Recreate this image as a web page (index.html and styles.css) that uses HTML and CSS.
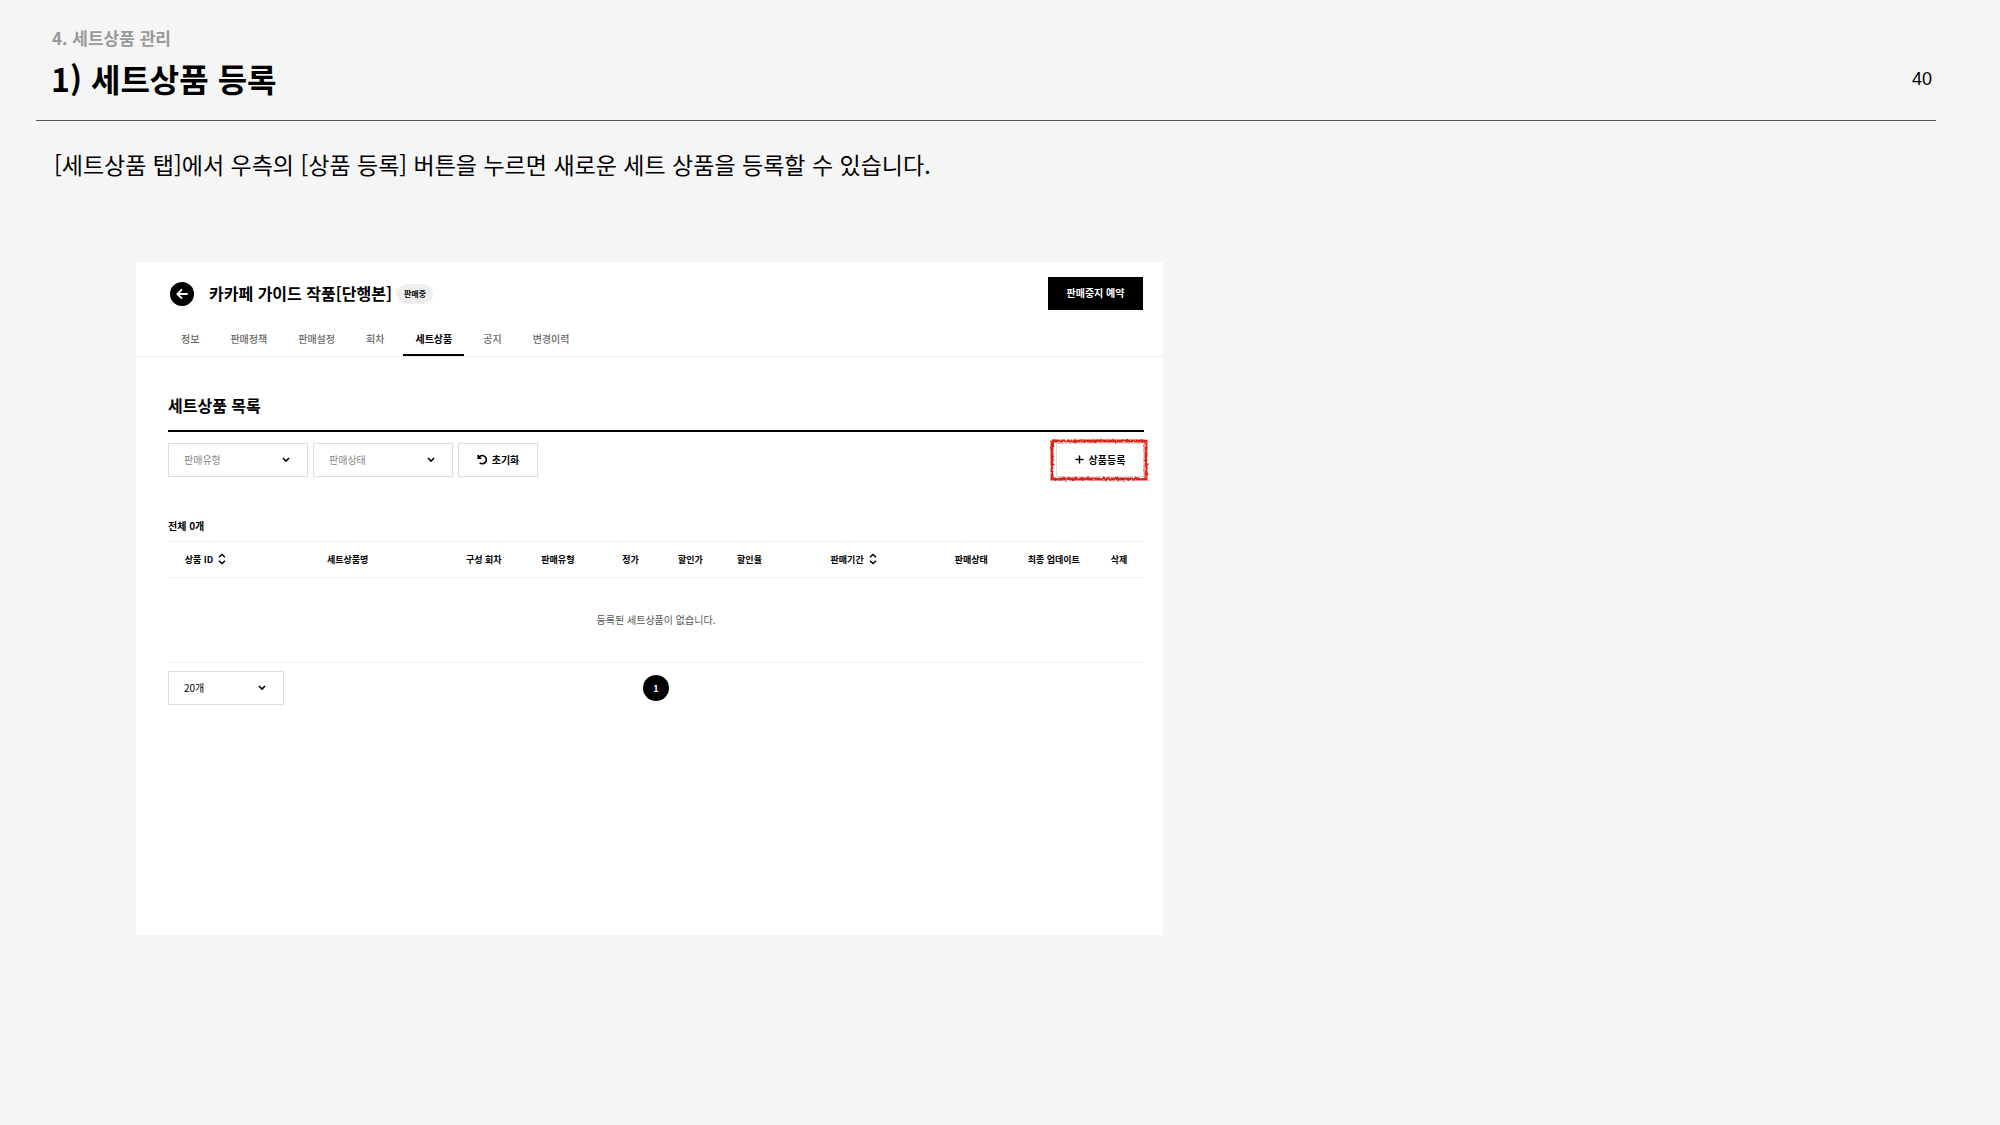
FILE: index.html
```html
<!DOCTYPE html>
<html lang="ko">
  <head>
    <meta charset="UTF-8" />
    <meta name="viewport" content="width=device-width, initial-scale=1.0" />
    <title>세트상품 등록</title>
    <link rel="stylesheet" href="styles.css">
  </head>
  <body>
    <header class="page-header">
      <div>
        <p class="chapter">4. 세트상품 관리</p>
        <h1>1) 세트상품 등록</h1>
      </div>
      <span class="page-number">40</span>
    </header>

    <p class="lead">[세트상품 탭]에서 우측의 [상품 등록] 버튼을 누르면 새로운 세트 상품을 등록할 수 있습니다.</p>

    <main class="panel">
      <div class="panel-header">
        <button class="back" aria-label="뒤로">
          <svg width="24" height="24" viewBox="0 0 24 24" fill="none" stroke="#fff" stroke-width="1.8" stroke-linecap="round" stroke-linejoin="round">
            <path d="M17 12H7.5M11.5 7.8L7.3 12l4.2 4.2" />
          </svg>
        </button>
        <h2>카카페 가이드 작품[단행본]</h2>
        <span class="badge">판매중</span>
        <button class="stop-button">판매중지 예약</button>
      </div>

      <nav class="tabs">
        <a href="#">정보</a>
        <a href="#">판매정책</a>
        <a href="#">판매설정</a>
        <a href="#">회차</a>
        <a href="#" class="active">세트상품</a>
        <a href="#">공지</a>
        <a href="#">변경이력</a>
      </nav>

      <section class="content">
        <h3>세트상품 목록</h3>

        <div class="filters">
          <select class="filter" aria-label="판매유형">
            <option>판매유형</option>
          </select>
          <select class="filter" aria-label="판매상태">
            <option>판매상태</option>
          </select>
          <button class="reset">
            <svg width="11" height="11" viewBox="0 0 11 11" fill="none" stroke="#000" stroke-width="1.6">
              <path d="M1.2 1v3.2h3.2M1.5 4A4.1 4.1 0 1 1 2.6 8.8" />
            </svg>
            초기화
          </button>
          <div class="add-wrap">
            <button class="add">
              <svg width="9" height="9" viewBox="0 0 9 9" stroke="#000" stroke-width="1.4">
                <path d="M4.5 0.5v8M0.5 4.5h8" />
              </svg>
              상품등록
            </button>
            <svg class="marker" aria-hidden="true">
              <filter id="crayon" x="-5%" y="-10%" width="110%" height="120%">
                <feTurbulence type="fractalNoise" baseFrequency="0.4" numOctaves="2" seed="4" />
                <feDisplacementMap in="SourceGraphic" scale="3" />
              </filter>
              <rect filter="url(#crayon)" />
            </svg>
          </div>
        </div>

        <p class="total">전체 0개</p>

        <table>
          <colgroup>
            <col class="col-id">
            <col class="col-name">
            <col class="col-episodes">
            <col class="col-type">
            <col class="col-price">
            <col class="col-price">
            <col class="col-rate">
            <col class="col-period">
            <col class="col-type">
            <col class="col-updated">
            <col class="col-delete">
          </colgroup>
          <thead>
            <tr>
              <th>
                <button class="sort">상품 ID
                  <svg width="8" height="12" viewBox="0 0 8 12" fill="none" stroke="#000" stroke-width="1.5"><path d="M1 4.2l3-2.7 3 2.7M1 7.8l3 2.7 3-2.7" /></svg>
                </button>
              </th>
              <th>세트상품명</th>
              <th>구성 회차</th>
              <th>판매유형</th>
              <th>정가</th>
              <th>할인가</th>
              <th>할인율</th>
              <th>
                <button class="sort">판매기간
                  <svg width="8" height="12" viewBox="0 0 8 12" fill="none" stroke="#000" stroke-width="1.5"><path d="M1 4.2l3-2.7 3 2.7M1 7.8l3 2.7 3-2.7" /></svg>
                </button>
              </th>
              <th>판매상태</th>
              <th>최종 업데이트</th>
              <th>삭제</th>
            </tr>
          </thead>
          <tbody>
            <tr>
              <td colspan="11">등록된 세트상품이 없습니다.</td>
            </tr>
          </tbody>
        </table>

        <div class="pagination">
          <select class="page-size" aria-label="페이지당 개수">
            <option>20개</option>
          </select>
          <button class="page">1</button>
        </div>
      </section>
    </main>
  </body>
</html>
```
FILE: styles.css
```css
* {
  box-sizing: border-box;
}
body {
  margin: 0;
  background-color: #f5f5f5;
  color: #000;
  font-family: "Noto Sans CJK KR", sans-serif;
}
h1,
h2,
h3,
p {
  margin: 0;
}
button,
select {
  padding: 0;
  border: none;
  border-radius: 0;
  background: none;
  color: inherit;
  font-family: inherit;
  font-size: 10px;
  cursor: pointer;
}
.page-header {
  display: flex;
  justify-content: space-between;
  align-items: flex-end;
  margin: 0 64px 0 36px;
  padding: 25px 4px 15px 15px;
  border-bottom: 1px solid #555;
}
.chapter {
  padding-left: 1px;
  color: #999;
  font-size: 17px;
  font-weight: 700;
  line-height: 26px;
}
h1 {
  font-size: 32px;
  font-weight: 700;
  line-height: 54px;
}
.page-number {
  font-family: "Liberation Sans", sans-serif;
  font-size: 18px;
  line-height: 20px;
  padding-bottom: 16px;
}
.lead {
  padding: 25px 54px 0;
  font-size: 23px;
  line-height: 36px;
}
.panel {
  width: 51.35%;
  margin: 80px 0 0 6.8%;
  padding-bottom: 230px;
  background-color: #fff;
}
.panel-header {
  display: flex;
  align-items: center;
  padding: 15px 20px 0 34px;
}
.back {
  width: 24px;
  height: 24px;
  border-radius: 50%;
  background-color: #000;
}
.back svg {
  display: block;
}
h2 {
  margin-left: 15px;
  padding-bottom: 2px;
  font-size: 16px;
  line-height: 24px;
}
.badge {
  margin-left: 5px;
  padding: 0 7px;
  border-radius: 10px;
  background-color: #eee;
  font-size: 8px;
  font-weight: 700;
  line-height: 20px;
}
.stop-button {
  width: 95px;
  height: 33px;
  margin-left: auto;
  padding-bottom: 2px;
  background-color: #000;
  color: #fff;
  font-weight: 700;
}
.tabs {
  display: flex;
  gap: 7px;
  margin-top: 14px;
  padding-left: 33px;
  border-bottom: 1px solid #eee;
}
.tabs a {
  padding: 0 12px;
  border-bottom: 2px solid transparent;
  color: #666;
  font-size: 10px;
  font-weight: 500;
  line-height: 30px;
  text-decoration: none;
}
.tabs .active {
  border-color: #000;
  color: #000;
  font-weight: 700;
}
.content {
  padding: 33px 19px 0 32px;
}
h3 {
  padding-bottom: 10px;
  border-bottom: 2px solid #000;
  font-size: 16px;
  line-height: 30px;
}
.filters {
  display: flex;
  gap: 5px;
  margin-top: 11px;
}
select {
  height: 34px;
  padding: 0 15px 2px;
  border: 1px solid #ddd;
  appearance: none;
  background: #fff url("data:image/svg+xml,%3Csvg xmlns='http://www.w3.org/2000/svg' viewBox='0 0 8 6'%3E%3Cpath fill='none' stroke='%23000' stroke-width='1.6' d='M1 1l3 3 3-3'/%3E%3C/svg%3E") no-repeat right 17px center;
  background-size: 8px 6px;
}
.filter {
  width: 140px;
  color: #888;
}
.reset,
.add {
  display: flex;
  align-items: center;
  justify-content: center;
  height: 34px;
  padding-bottom: 2px;
  border: 1px solid #ddd;
  font-weight: 700;
}
.reset {
  gap: 4px;
  width: 80px;
}
.add-wrap {
  position: relative;
  margin-left: auto;
}
.add {
  gap: 5px;
  width: 88px;
}
/* red hand-drawn frame over the button */
.marker {
  position: absolute;
  top: -4px;
  left: -6px;
  width: 98px;
  height: 43px;
  overflow: visible;
  pointer-events: none;
}
.marker rect {
  x: 2px;
  y: 2px;
  width: 94px;
  height: 38px;
  fill: none;
  stroke: #d9251c;
  stroke-width: 3px;
}
.total {
  margin-top: 40px;
  font-size: 10px;
  font-weight: 700;
  line-height: 18px;
}
table {
  width: 100%;
  margin-top: 6px;
  border-collapse: collapse;
  table-layout: fixed;
}
.col-id { width: 75px; }
.col-name { width: 209px; }
.col-episodes { width: 63px; }
.col-type { width: 85px; }
.col-price { width: 60px; }
.col-rate { width: 58px; }
.col-period { width: 150px; }
.col-updated { width: 80px; }
.col-delete { width: 50px; }
th,
td {
  padding: 0 0 1px;
  text-align: center;
}
th {
  height: 36px;
  border-top: 1px solid #eee;
  border-bottom: 1px solid #eee;
  font-size: 9px;
  font-weight: 700;
  white-space: nowrap;
}
td {
  height: 85px;
  border-bottom: 1px solid #eee;
  color: #555;
  font-size: 10px;
}
.sort {
  display: inline-flex;
  align-items: center;
  gap: 5px;
  font-size: 9px;
  font-weight: 700;
}
.pagination {
  display: grid;
  grid-template-columns: 1fr auto 1fr;
  align-items: center;
  margin-top: 8px;
}
.page-size {
  width: 116px;
}
.page {
  width: 26px;
  height: 26px;
  border-radius: 50%;
  background-color: #000;
  color: #fff;
  font-size: 9px;
  font-weight: 700;
}
```
